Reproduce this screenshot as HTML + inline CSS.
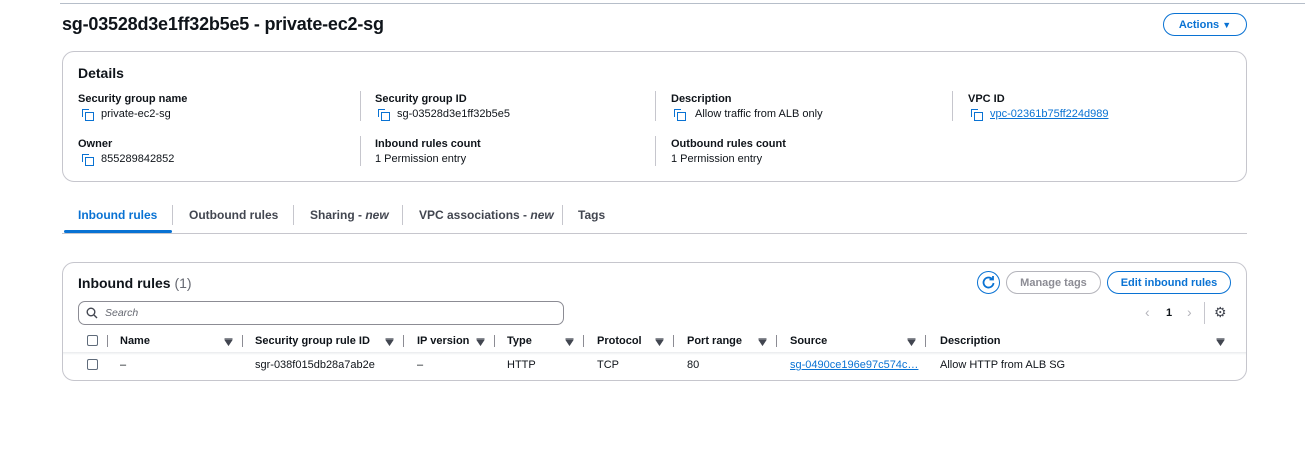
<!DOCTYPE html>
<html><head><meta charset="utf-8"><style>
*{margin:0;padding:0;box-sizing:border-box}
body{width:1305px;height:450px;background:#fff;position:relative;overflow:hidden;font-family:"Liberation Sans",sans-serif;color:#0f141a;font-size:11px}
.a{position:absolute;white-space:nowrap}
.b{font-weight:bold}
.lnk{color:#0972d3;text-decoration:underline}
.sep{position:absolute;width:1px;background:#c6c6cd}
.btn{position:absolute;display:flex;align-items:center;justify-content:center;border-radius:12px;font-weight:bold;font-size:11px}
.cp{position:absolute;width:10px;height:10px}
.cp:before{content:"";position:absolute;left:0;top:0;width:6px;height:7px;border-left:1.5px solid #0972d3;border-top:1.5px solid #0972d3}
.cp:after{content:"";position:absolute;left:3px;top:3px;width:7px;height:7px;border:1.5px solid #0972d3}
.cb{position:absolute;width:11px;height:11px;border:1.5px solid #5f6b7a;border-radius:2px}
.fl{position:absolute;width:9px;height:8px}
.hs{position:absolute;width:1px;height:12px;background:#8c8c94}
</style></head><body>
<svg width="0" height="0" style="position:absolute"><defs><symbol id="f" viewBox="0 0 9 8"><path d="M0.5 1h8M1.5 2.5h6L4.5 7z" stroke="#424650" stroke-width="1.2" fill="#424650"/></symbol></defs></svg>
<div class="a" style="left:60px;top:3px;width:1245px;height:1px;background:#b6bec9"></div>
<div class="a b" style="left:62px;top:14px;font-size:18px;letter-spacing:-0.2px">sg-03528d3e1ff32b5e5 - private-ec2-sg</div>
<div class="btn" style="left:1163px;top:13px;width:84px;height:23px;border:1.5px solid #0972d3;color:#0972d3">Actions&nbsp;<span style="font-size:9px">&#9660;</span></div>

<div class="a" style="left:62px;top:51px;width:1185px;height:131px;border:1px solid #c6c6cd;border-radius:12px"></div>
<div class="a b" style="left:78px;top:65px;font-size:14px">Details</div>
<div class="sep" style="left:360px;top:91px;height:30px"></div>
<div class="sep" style="left:655px;top:91px;height:30px"></div>
<div class="sep" style="left:952px;top:91px;height:30px"></div>
<div class="sep" style="left:360px;top:136px;height:30px"></div>
<div class="sep" style="left:655px;top:136px;height:30px"></div>

<div class="a b" style="left:78px;top:93px">Security group name</div>
<div class="cp" style="left:82px;top:109px"></div><div class="a" style="left:101px;top:108px">private-ec2-sg</div>
<div class="a b" style="left:375px;top:93px">Security group ID</div>
<div class="cp" style="left:378px;top:109px"></div><div class="a" style="left:397px;top:108px">sg-03528d3e1ff32b5e5</div>
<div class="a b" style="left:671px;top:93px">Description</div>
<div class="cp" style="left:674px;top:109px"></div><div class="a" style="left:695px;top:108px">Allow traffic from ALB only</div>
<div class="a b" style="left:968px;top:93px">VPC ID</div>
<div class="cp" style="left:971px;top:109px"></div><div class="a lnk" style="left:990px;top:108px">vpc-02361b75ff224d989</div>

<div class="a b" style="left:78px;top:138px">Owner</div>
<div class="cp" style="left:82px;top:154px"></div><div class="a" style="left:101px;top:153px">855289842852</div>
<div class="a b" style="left:375px;top:138px">Inbound rules count</div>
<div class="a" style="left:375px;top:153px">1 Permission entry</div>
<div class="a b" style="left:671px;top:138px">Outbound rules count</div>
<div class="a" style="left:671px;top:153px">1 Permission entry</div>

<div class="a" style="left:62px;top:233px;width:1185px;height:1px;background:#c6c6cd"></div>
<div class="a" style="left:64px;top:230px;width:108px;height:3px;background:#0972d3;border-radius:2px"></div>
<div class="a b" style="left:78px;top:208px;font-size:12px;color:#0972d3">Inbound rules</div>
<div class="sep" style="left:172px;top:205px;height:20px"></div>
<div class="a b" style="left:189px;top:208px;font-size:12px;color:#424650">Outbound rules</div>
<div class="sep" style="left:293px;top:205px;height:20px"></div>
<div class="a b" style="left:310px;top:208px;font-size:12px;color:#424650">Sharing - <i>new</i></div>
<div class="sep" style="left:402px;top:205px;height:20px"></div>
<div class="a b" style="left:419px;top:208px;font-size:12px;color:#424650">VPC associations - <i>new</i></div>
<div class="sep" style="left:562px;top:205px;height:20px"></div>
<div class="a b" style="left:578px;top:208px;font-size:12px;color:#424650">Tags</div>

<div class="a" style="left:62px;top:262px;width:1185px;height:119px;border:1px solid #c6c6cd;border-radius:12px"></div>
<div class="a b" style="left:78px;top:275px;font-size:14px">Inbound rules <span style="font-weight:normal;color:#656871">(1)</span></div>
<div class="a" style="left:977px;top:271px;width:23px;height:23px;border:1.5px solid #0972d3;border-radius:50%"></div>
<svg class="a" style="left:981px;top:275px" width="15" height="15" viewBox="0 0 15 15"><path d="M11.5 4.5A5 5 0 1 0 12.5 8" fill="none" stroke="#0972d3" stroke-width="1.8"/><path d="M8.5 4.5h3.5V1" fill="none" stroke="#0972d3" stroke-width="1.8"/></svg>
<div class="btn" style="left:1006px;top:271px;width:95px;height:23px;border:1.5px solid #b4b4bb;color:#8c8c94">Manage tags</div>
<div class="btn" style="left:1107px;top:271px;width:124px;height:23px;border:1.5px solid #0972d3;color:#0972d3">Edit inbound rules</div>

<div class="a" style="left:78px;top:301px;width:486px;height:24px;border:1px solid #8c8c94;border-radius:7px"></div>
<svg class="a" style="left:86px;top:307px" width="12" height="12" viewBox="0 0 12 12"><circle cx="5" cy="5" r="3.8" fill="none" stroke="#424650" stroke-width="1.4"/><path d="M8 8l3 3" stroke="#424650" stroke-width="1.4"/></svg>
<div class="a" style="left:105px;top:307px;font-style:italic;color:#656871;font-size:10.5px">Search</div>

<div class="a" style="left:1145px;top:304px;color:#b4b4bb;font-size:14px">&#8249;</div>
<div class="a b" style="left:1166px;top:307px">1</div>
<div class="a" style="left:1187px;top:304px;color:#b4b4bb;font-size:14px">&#8250;</div>
<div class="sep" style="left:1204px;top:302px;height:22px"></div>
<div class="a" style="left:1214px;top:304px;font-size:14px;color:#424650">&#9881;</div>

<div class="a" style="left:63px;top:352px;width:1183px;height:3px;background:linear-gradient(#e9ebed,#fff)"></div>
<div class="cb" style="left:87px;top:335px"></div>
<div class="hs" style="left:107px;top:335px"></div>
<div class="a b" style="left:120px;top:335px">Name</div><svg class="fl" style="left:224px;top:338px"><use href="#f"/></svg><div class="hs" style="left:242px;top:335px"></div>
<div class="a b" style="left:255px;top:335px">Security group rule ID</div><svg class="fl" style="left:385px;top:338px"><use href="#f"/></svg><div class="hs" style="left:403px;top:335px"></div>
<div class="a b" style="left:417px;top:335px">IP version</div><svg class="fl" style="left:476px;top:338px"><use href="#f"/></svg><div class="hs" style="left:494px;top:335px"></div>
<div class="a b" style="left:507px;top:335px">Type</div><svg class="fl" style="left:565px;top:338px"><use href="#f"/></svg><div class="hs" style="left:583px;top:335px"></div>
<div class="a b" style="left:597px;top:335px">Protocol</div><svg class="fl" style="left:655px;top:338px"><use href="#f"/></svg><div class="hs" style="left:673px;top:335px"></div>
<div class="a b" style="left:687px;top:335px">Port range</div><svg class="fl" style="left:758px;top:338px"><use href="#f"/></svg><div class="hs" style="left:776px;top:335px"></div>
<div class="a b" style="left:790px;top:335px">Source</div><svg class="fl" style="left:907px;top:338px"><use href="#f"/></svg><div class="hs" style="left:925px;top:335px"></div>
<div class="a b" style="left:940px;top:335px">Description</div><svg class="fl" style="left:1216px;top:338px"><use href="#f"/></svg>

<div class="cb" style="left:87px;top:359px"></div>
<div class="a" style="left:120px;top:359px">–</div>
<div class="a" style="left:255px;top:359px">sgr-038f015db28a7ab2e</div>
<div class="a" style="left:417px;top:359px">–</div>
<div class="a" style="left:507px;top:359px">HTTP</div>
<div class="a" style="left:597px;top:359px">TCP</div>
<div class="a" style="left:687px;top:359px">80</div>
<div class="a lnk" style="left:790px;top:359px">sg-0490ce196e97c574c…</div>
<div class="a" style="left:940px;top:359px">Allow HTTP from ALB SG</div>
</body></html>
